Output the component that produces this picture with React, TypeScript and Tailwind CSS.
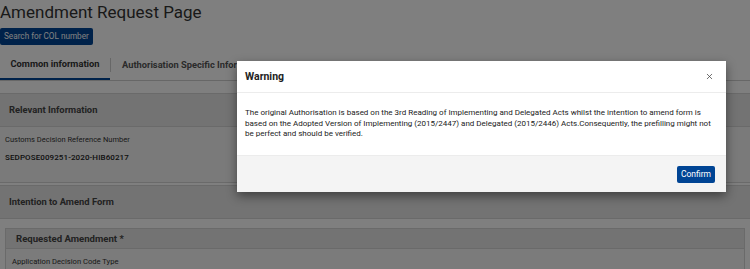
import { X } from 'lucide-react'

function PanelHeader({ title, className = '' }: { title: string, className?: string }) {
  return (
    <div className={`flex items-center bg-[#e6e6e6] border-b border-[#d4d4d4] ${className}`}>
      <span className="font-bold text-[#444]">{title}</span>
    </div>
  )
}

function WarningModal() {
  return (
    <div className="absolute left-[237px] top-[61px] w-[489px] h-[131px] bg-white flex flex-col shadow-[0_4px_10px_rgba(0,0,0,0.45)]">
      <div className="h-[32px] flex items-center justify-between px-2 border-b border-[#ececec]">
        <span className="text-[10.5px] font-bold text-[#222]">Warning</span>
        <X className="w-[9px] h-[9px] mr-[4px] text-[#444]" strokeWidth={2} />
      </div>
      <div className="flex-1 px-2 pt-[15px] text-[8px] leading-[10.5px] text-[#222]">
        The original Authorisation is based on the 3rd Reading of Implementing and Delegated Acts whilst the intention to amend form is based on the Adopted Version of Implementing (2015/2447) and Delegated (2015/2446) Acts.Consequently, the prefilling might not be perfect and should be verified.
      </div>
      <div className="h-[37px] bg-[#f4f4f4] border-t border-[#ececec] flex items-center justify-end pr-[11px]">
        <button className="h-[17px] w-[38px] rounded-[2px] bg-[#004494] text-white text-[8.5px]">Confirm</button>
      </div>
    </div>
  )
}

export default function App() {
  return (
    <div className="relative w-[750px] h-[269px] overflow-hidden bg-white font-['Roboto',sans-serif] text-[#333]">
      <h1 className="text-[17px] leading-[20px] pt-[2px] text-[#333]">Amendment Request Page</h1>
      <button className="mt-[6px] h-[17px] px-[4px] rounded-[2px] bg-[#004494] text-white text-[8.2px]">Search for COL number</button>

      <div className="mt-[4px] flex border-b border-[#cfcfcf] h-[31px]">
        <div className="w-[110px] flex items-center justify-center border-b-2 border-[#004494] text-[9.3px] font-bold text-[#333]">Common information</div>
        <div className="self-center w-px h-[14px] bg-[#cfcfcf]" />
        <div className="flex items-center pl-[11px] text-[9.3px] font-bold text-[#555] whitespace-nowrap">Authorisation Specific Information</div>
      </div>

      <div className="mt-[12px] border-t border-[#d4d4d4] border-b">
        <PanelHeader title="Relevant Information" className="h-[33px] pl-[9px] text-[9.4px]" />
        <div className="bg-[#f5f5f5] h-[55px] pl-[5px] pt-[8px]">
          <div className="text-[7.5px] leading-[10px] text-[#333]">Customs Decision Reference Number</div>
          <div className="mt-[7px] text-[8px] leading-[12px] font-medium text-[#222] tracking-[0.1px]">SEDPOSE009251-2020-HIB60217</div>
        </div>
      </div>

      <div className="mt-[2px] border-t border-[#d4d4d4]">
        <PanelHeader title="Intention to Amend Form" className="h-[33px] pl-[9px] text-[9.4px]" />
        <div className="pt-[9px] px-[5px]">
          <div className="border border-[#d4d4d4]">
            <PanelHeader title="Requested Amendment *" className="h-[20px] pl-[10px] text-[9.6px]" />
            <div className="bg-[#f6f6f6] pl-[6px] pt-[8px] h-[30px] text-[7.6px] leading-[10px] text-[#333]">Application Decision Code Type</div>
          </div>
        </div>
      </div>

      <div className="absolute inset-0 bg-black/50" />
      <WarningModal />
    </div>
  )
}
